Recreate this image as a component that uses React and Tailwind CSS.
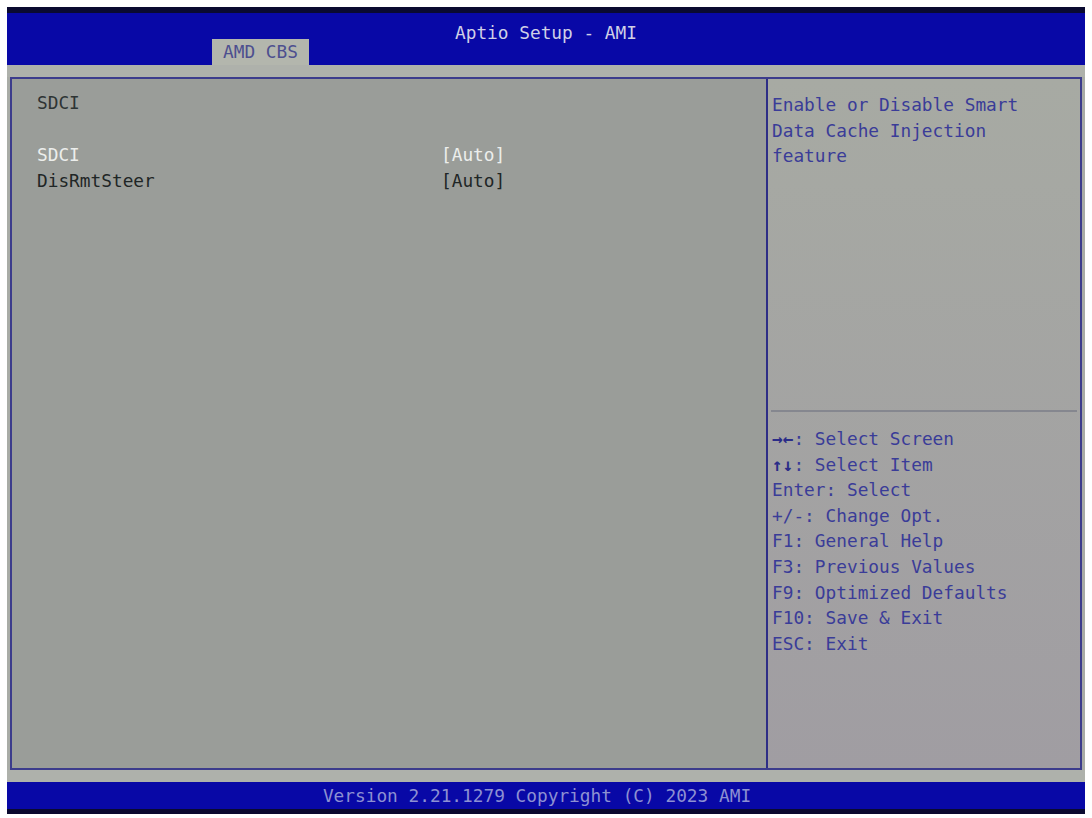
export default function App() {
  const mono = { fontFamily: '"DejaVu Sans Mono", "Liberation Mono", monospace' };
  const hotkeys = [
    ["→←", ": Select Screen"],
    ["↑↓", ": Select Item"],
    ["", "Enter: Select"],
    ["", "+/-: Change Opt."],
    ["", "F1: General Help"],
    ["", "F3: Previous Values"],
    ["", "F9: Optimized Defaults"],
    ["", "F10: Save & Exit"],
    ["", "ESC: Exit"],
  ];
  return (
    <div className="w-[1092px] h-[818px] bg-white pt-[7px] px-[7px] overflow-hidden" style={mono}>
      <div className="flex flex-col w-[1078px] bg-[#a9aca6]">
        {/* Header */}
        <div className="relative h-[58px] bg-[#0808a6] border-t-[6px] border-[#0a0a30]">
          <div className="absolute left-0 right-0 top-[10px] text-center text-[17.8px] leading-[20px] text-[#cfd0e6]">
            Aptio Setup - AMI
          </div>
          <div className="absolute left-[205px] bottom-0 w-[97px] h-[26px] bg-[#b3b6ad] text-[#4d4f8f] text-[17.8px] leading-[26px] text-center">
            AMD CBS
          </div>
        </div>
        <div className="h-[12px] bg-[#aeb1ab]" />
        {/* Main panel */}
        <div className="mx-[3px] h-[693px] flex border-2 border-[#3c3c8c] bg-[#9a9d99]">
          <div className="w-[756px] pl-[25px] pt-[11px] text-[17.8px] leading-[26px] border-r-2 border-[#2e2e86]">
            <div className="text-[#2e3434]">SDCI</div>
            <div className="h-[26px]" />
            <div className="flex">
              <div className="w-[404px] text-[#eceeec]">SDCI</div>
              <div className="text-[#eceeec]">[Auto]</div>
            </div>
            <div className="flex">
              <div className="w-[404px] text-[#1f2626]">DisRmtSteer</div>
              <div className="text-[#1f2626]">[Auto]</div>
            </div>
          </div>
          <div className="flex-1 flex flex-col bg-gradient-to-b from-[#a7aaa3] to-[#a09da2]">
            <div className="h-[331px] pl-[4px] pt-[13px] text-[17.8px] leading-[25.6px] text-[#3a3c98]">
              <div>Enable or Disable Smart</div>
              <div>Data Cache Injection</div>
              <div>feature</div>
            </div>
            <div className="mx-[3px] h-[2px] bg-[#85878f]" />
            <div className="pl-[4px] pt-[14px] text-[17.8px] leading-[25.6px] text-[#3a3c98]">
              {hotkeys.map(([a, t], i) => (
                <div key={i}>
                  {a && <span className="font-bold text-[#2a2c88]">{a}</span>}
                  {t}
                </div>
              ))}
            </div>
          </div>
        </div>
        <div className="h-[12px] bg-[#aeb1ab]" />
        {/* Footer */}
        <div className="h-[32px] bg-[#0808a6] border-b-[5px] border-[#0a0a30] text-center text-[17.8px] leading-[27px] text-[#8d90d2] pr-[18px]">
          Version 2.21.1279 Copyright (C) 2023 AMI
        </div>
      </div>
    </div>
  );
}
